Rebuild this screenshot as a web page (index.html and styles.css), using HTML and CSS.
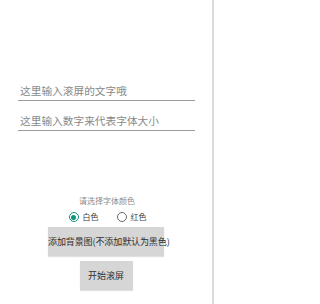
FILE: index.html
```html
<!DOCTYPE html>
<html lang="zh">
<head>
<meta charset="utf-8">
<link rel="stylesheet" href="styles.css">
</head>
<body>
<div class="page">
  <div class="field field-first">这里输入滚屏的文字哦</div>
  <div class="field field-second">这里输入数字来代表字体大小</div>
  <div class="label">请选择字体颜色</div>
  <div class="radios">
    <span class="radio checked"><span class="dot"></span></span>
    <span class="radio-text">白色</span>
    <span class="radio radio-second"></span>
    <span class="radio-text">红色</span>
  </div>
  <div class="btn btn-wide">添加背景图(不添加默认为黑色)</div>
  <div class="btn btn-small">开始滚屏</div>
</div>
</body>
</html>
```
FILE: styles.css
```css
html, body {
  margin: 0;
  padding: 0;
  background: #ffffff;
}
.page {
  width: 212px;
  height: 304px;
  border-right: 2px solid #dcdcdc;
  display: flex;
  flex-direction: column;
  font-family: "Noto Sans CJK SC", "Noto Sans", sans-serif;
}
.field {
  margin-left: 18px;
  width: 175px;
  height: 13px;
  line-height: 13px;
  padding-bottom: 3px;
  border-bottom: 1px solid #9c9c9c;
  font-size: 10.7px;
  color: #8a8a8a;
  white-space: nowrap;
  padding-left: 2px;
  box-sizing: content-box;
}
.field-first { margin-top: 84px; }
.field-second { margin-top: 13px; }
.label {
  margin-top: 65px;
  height: 10px;
  line-height: 10px;
  font-size: 8px;
  color: #8c8c8c;
  text-align: center;
  padding-left: 2px;
}
.radios {
  margin-top: 5px;
  height: 12px;
  display: flex;
  align-items: center;
  justify-content: center;
  padding-left: 3px;
}
.radio {
  width: 10px;
  height: 10px;
  box-sizing: border-box;
  border-radius: 50%;
  border: 1.3px solid #6a6a6a;
  display: flex;
  align-items: center;
  justify-content: center;
}
.radio.checked { border-color: #11927f; }
.dot {
  width: 5px;
  height: 5px;
  border-radius: 50%;
  background: #11927f;
}
.radio-text {
  margin-left: 4px;
  font-size: 8px;
  line-height: 12px;
  color: #3a3a3a;
}
.radio-second { margin-left: 18px; }
.btn {
  align-self: center;
  height: 29px;
  background: #d6d6d6;
  color: #2e2e2e;
  font-size: 9px;
  line-height: 29px;
  text-align: center;
  white-space: nowrap;
  box-shadow: 0 1px 1px rgba(0,0,0,0.12);
}
.btn-wide {
  margin-top: 4px;
  width: 116px;
  letter-spacing: -0.1px;
}
.btn-small {
  margin-top: 5px;
  width: 53px;
}
```
